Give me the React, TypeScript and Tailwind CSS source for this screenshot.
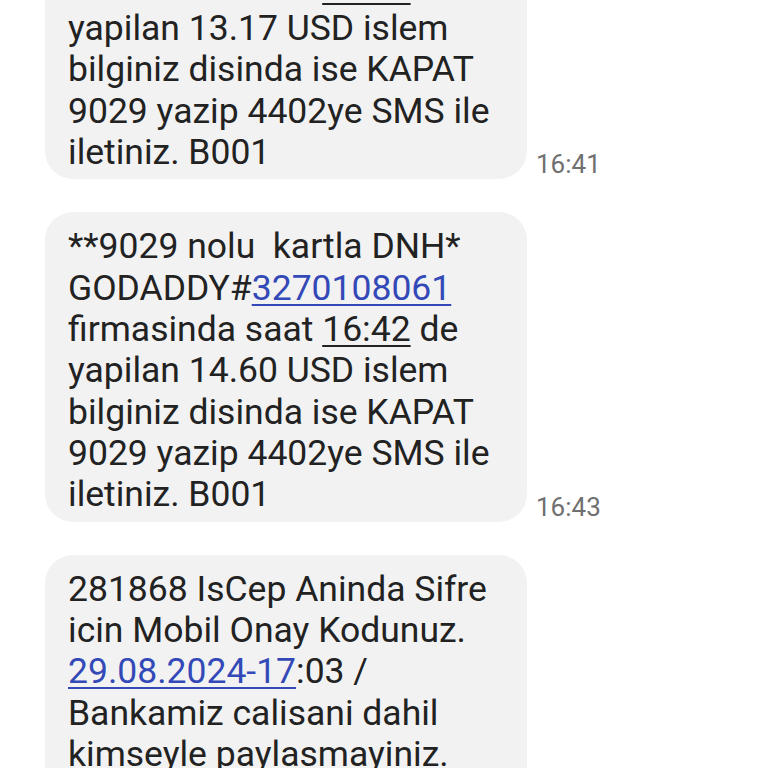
import React from 'react';

interface Part {
  text: string;
  kind?: 'link' | 'time';
}

interface Message {
  lines: Part[][];
  time?: string;
}

const messages: Message[] = [
  {
    lines: [
      [{ text: '**9029 nolu  kartla DNH*' }],
      [{ text: 'GODADDY#' }, { text: '3270102934', kind: 'link' }],
      [{ text: 'firmasinda saat ' }, { text: '16:40', kind: 'time' }, { text: ' de' }],
      [{ text: 'yapilan 13.17 USD islem' }],
      [{ text: 'bilginiz disinda ise KAPAT' }],
      [{ text: '9029 yazip 4402ye SMS ile' }],
      [{ text: 'iletiniz. B001' }],
    ],
    time: '16:41',
  },
  {
    lines: [
      [{ text: '**9029 nolu  kartla DNH*' }],
      [{ text: 'GODADDY#' }, { text: '3270108061', kind: 'link' }],
      [{ text: 'firmasinda saat ' }, { text: '16:42', kind: 'time' }, { text: ' de' }],
      [{ text: 'yapilan 14.60 USD islem' }],
      [{ text: 'bilginiz disinda ise KAPAT' }],
      [{ text: '9029 yazip 4402ye SMS ile' }],
      [{ text: 'iletiniz. B001' }],
    ],
    time: '16:43',
  },
  {
    lines: [
      [{ text: '281868 IsCep Aninda Sifre' }],
      [{ text: 'icin Mobil Onay Kodunuz.' }],
      [{ text: '29.08.2024-17', kind: 'link' }, { text: ':03 /' }],
      [{ text: 'Bankamiz calisani dahil' }],
      [{ text: 'kimseyle paylasmayiniz.' }],
      [{ text: 'Bilgi icin 0850 724 0 724' }],
    ],
  },
];

const Bubble: React.FC<{ message: Message }> = ({ message }) => (
  <div className="flex items-end">
    <div className="w-[482px] rounded-[28px] bg-[#f2f2f2] pl-[23px] pr-4 pt-[14px] pb-[6px] text-[35.5px] leading-[41.33px] text-[#222222] whitespace-pre">
      {message.lines.map((line, i) => (
        <div key={i}>
          {line.map((part, j) =>
            part.kind === 'link' ? (
              <span key={j} className="text-[#3349b8] underline decoration-[1.5px] underline-offset-[4px]">
                {part.text}
              </span>
            ) : part.kind === 'time' ? (
              <span key={j} className="underline decoration-[1.5px] underline-offset-[4px]">
                {part.text}
              </span>
            ) : (
              <span key={j}>{part.text}</span>
            )
          )}
        </div>
      ))}
    </div>
    {message.time && (
      <div className="ml-[9px] mb-0 text-[26px] leading-[30px] text-[#707070]">{message.time}</div>
    )}
  </div>
);

export default function App() {
  return (
    <div
      className="w-[768px] h-[768px] overflow-hidden bg-white"
      style={{ fontFamily: 'Roboto, "Noto Sans", sans-serif' }}
    >
      <div className="flex flex-col gap-[33px] pl-[45px] -mt-[130px]">
        {messages.map((m, i) => (
          <Bubble key={i} message={m} />
        ))}
      </div>
    </div>
  );
}
